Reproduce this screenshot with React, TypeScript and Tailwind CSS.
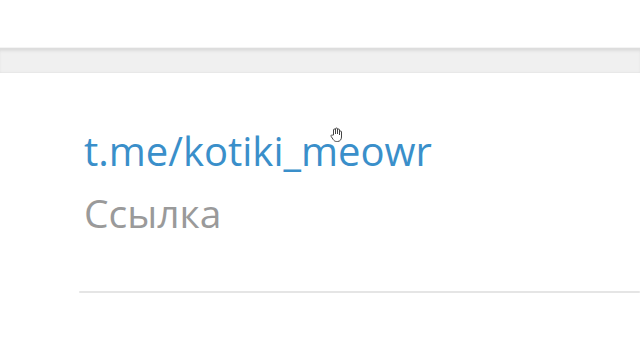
export default function App() {
  return (
    <main className="w-[640px] h-[360px] bg-white overflow-hidden relative" style={{ fontFamily: '"Open Sans", "Noto Sans", sans-serif' }}>
      {/* Top spacer */}
      <div className="h-[47px] bg-white" />

      {/* Section separator band */}
      <div className="h-[26px] bg-[#f0f0f0] border-t border-[#f4f4f4] shadow-[inset_0_4px_3px_-1px_#dcdcdc,inset_0_-2px_2px_-1px_#e6e6e6]" />

      {/* Info row */}
      <div className="pl-[84px] pt-[54px]">
        <div className="text-[40px] leading-[48px] text-[#3a8fca] whitespace-nowrap">t.me/kotiki_meowr</div>
        <div className="text-[39px] leading-[48px] text-[#9a9a9a] mt-[14px]">Ссылка</div>
      </div>

      {/* Divider */}
      <div className="ml-[79px] mt-[54px] h-[2px] bg-[#e5e5e5] rounded-full" />

      {/* Hand cursor */}
      <svg className="absolute left-[330px] top-[127px]" width="12" height="15" viewBox="0 0 12 15" fill="#ffffff" stroke="#444" strokeWidth="1">
        <path d="M3.5 8V3a1 1 0 0 1 2 0v4V2a1 1 0 0 1 2 0v5V3a1 1 0 0 1 2 0v5V5a1 1 0 0 1 2 0v5c0 2.5-1.5 4.5-4 4.5H6.5c-1.5 0-2.5-.8-3.3-2L1.2 9.5a1 1 0 0 1 1.6-1.2z" />
      </svg>
    </main>
  )
}
